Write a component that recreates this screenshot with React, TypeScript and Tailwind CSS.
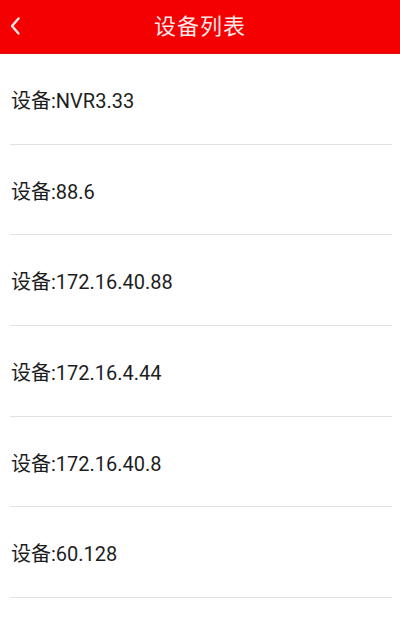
import React from 'react';

const devices = ['NVR3.33', '88.6', '172.16.40.88', '172.16.4.44', '172.16.40.8', '60.128'];

export default function App() {
  return (
    <div className="w-[400px] h-[632px] bg-white overflow-hidden" style={{ fontFamily: 'Roboto, "Noto Sans CJK SC", sans-serif' }}>
      {/* Title bar */}
      <div className="relative h-[54px] bg-[#f40000] border-b border-[#d81010] flex items-center justify-center">
        <button className="absolute left-[6px] top-[15px] w-[18px] h-[22px] flex items-center justify-center">
          <svg width="12" height="20" viewBox="0 0 12 20" fill="none">
            <path d="M9.5 2.5 L3 10 L9.5 17.5" stroke="#ffe6e6" strokeWidth="2.4" strokeLinecap="round" strokeLinejoin="round" />
          </svg>
        </button>
        <span className="text-[22px] text-[#ffe8e8] tracking-[1px] leading-none">设备列表</span>
      </div>

      {/* Device rows */}
      <div className="flex flex-col">
        {devices.map((d) => (
          <div key={d} className="flex flex-col">
            <div className="h-[89.7px] flex items-center pl-[11px] pt-[4px] text-[20px] text-[#1e1e1e]">
              设备:{d}
            </div>
            <div className="ml-[10px] mr-[8px] h-px bg-[#e2e2e2]" />
          </div>
        ))}
      </div>
    </div>
  );
}
